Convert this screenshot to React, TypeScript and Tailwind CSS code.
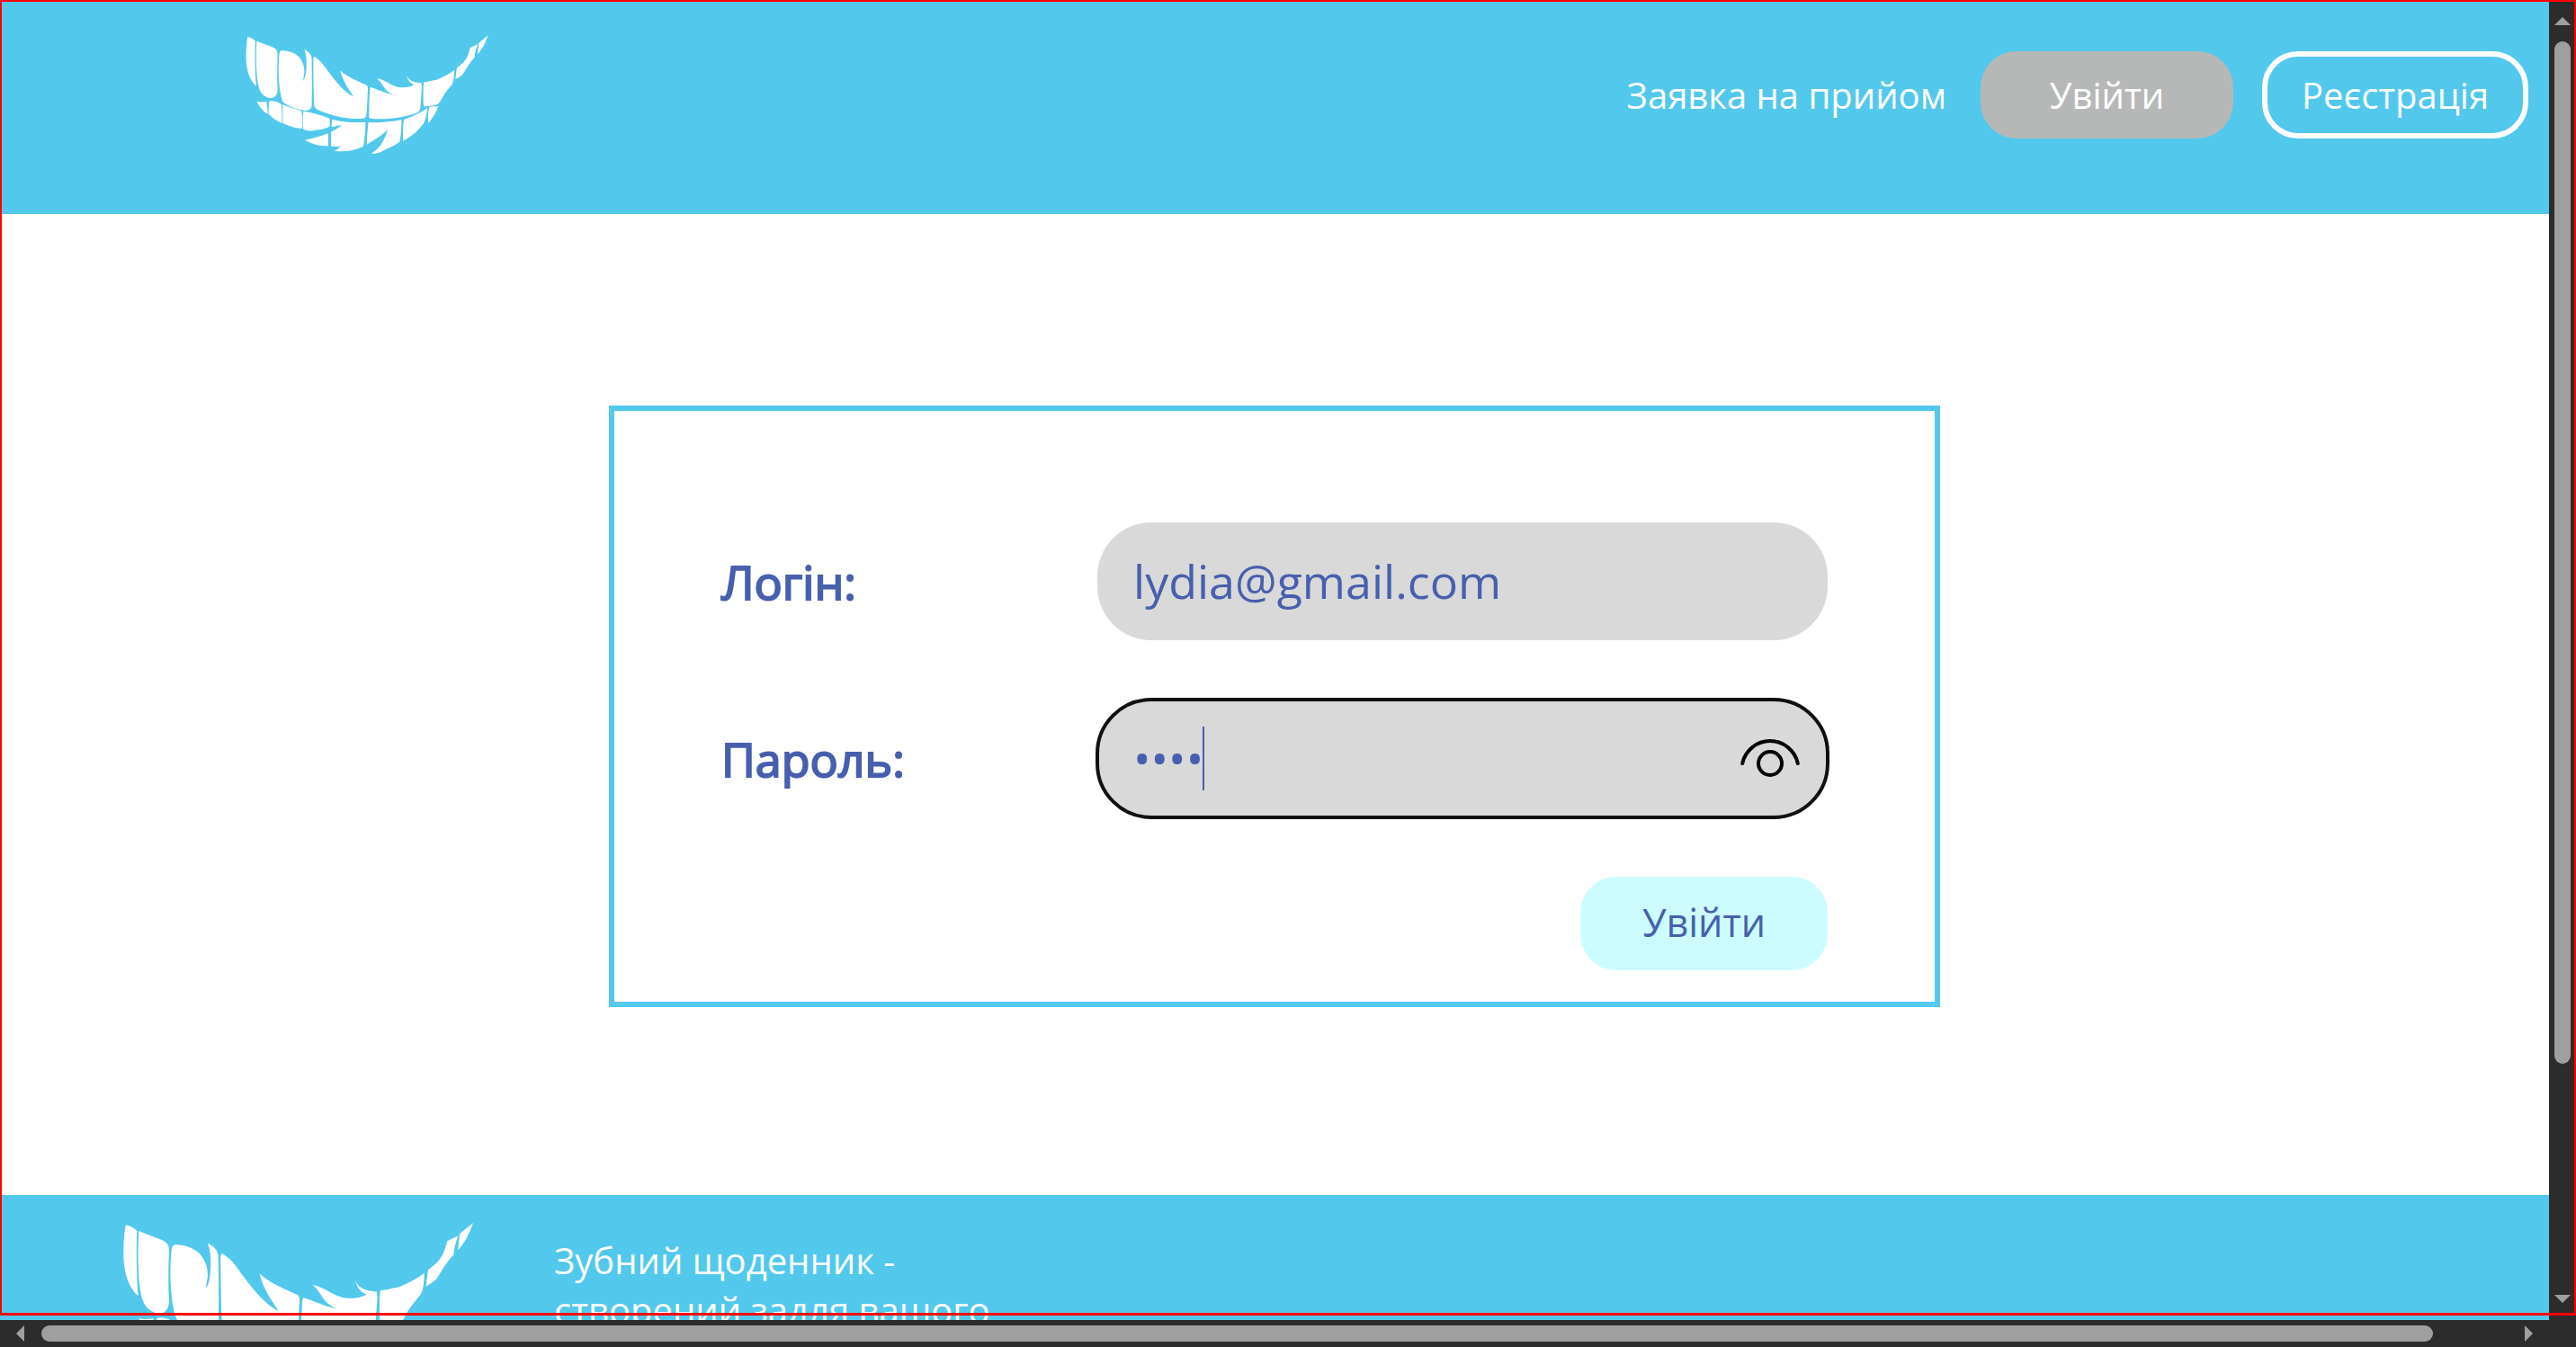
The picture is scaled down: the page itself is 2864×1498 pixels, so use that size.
import { useState } from "react";

const TEETH = [
  "M46 33C55 34 65 40 72 47C70 80 71 160 75 197C55 180 43 150 41 110C40 80 42 55 46 33Z",
  "M76 47L128 67C142 73 147 80 146 95C144 130 144 180 146 205C147 228 135 238 122 238C100 233 88 220 83 200C74 165 73 100 76 47Z",
  "M158 79C180 77 205 87 217 100C232 118 236 135 235 155C232 165 233 172 230 180C240 172 243 140 242 110C241 95 239 85 235 75C245 80 256 88 259 100C261 110 261 240 260 262C258 276 250 279 238 279C205 275 180 262 165 252C155 235 150 190 149 150C149 125 150 110 151 97C152 85 154 80 158 79Z",
  "M268 98C295 115 305 135 320 155C345 188 370 218 399 232C385 210 362 180 355 145C375 165 410 180 440 193C445 196 447 198 447 205C446 240 444 270 442 292C441 302 437 305 425 306C385 308 345 300 310 288C290 281 268 275 268 262C266 220 265 150 265 105Z",
  "M456 201C475 205 505 222 535 227C500 215 500 190 477 171C510 178 530 202 560 202C580 202 590 200 602 193C590 190 580 178 576 162C585 180 600 185 625 187L627 200L622 270C620 282 615 285 600 290C560 303 505 310 460 306C451 305 450 300 451 290C451 260 452 230 454 205Z",
  "M634 184C655 182 665 177 675 177C695 168 715 160 735 144C735 160 734 175 729 190C718 205 703 220 693 240C688 250 683 258 675 260C660 263 645 264 635 265C631 264 632 230 632 200Z",
  "M744 136C775 115 780 100 788 70L813 58C808 75 804 85 803 102C785 120 775 140 765 155C758 165 750 168 739 175Z",
  "M817 53L848 28C838 55 828 75 813 91Z",
  "M76 249C90 252 100 250 109 249C112 265 112 280 114 291C100 285 85 265 76 249Z",
  "M118 248C128 244 145 248 159 259C161 280 160 300 161 321C145 315 125 300 116 290C117 275 115 260 118 248Z",
  "M163 259C185 268 205 275 226 280C229 300 228 320 228 339C205 337 180 330 163 320Z",
  "M232 281C260 284 290 294 320 305L320 331C300 345 280 341 265 346C250 348 235 345 231 340C229 320 229 300 232 281Z",
  "M236 377C265 373 290 364 315 355L315 397C290 398 260 390 236 377Z",
  "M327 308C360 317 400 320 439 317C439 345 436 375 432 399C400 413 370 418 333 413C345 410 350 405 355 398C345 400 335 399 324 398L324 350C340 342 350 335 360 326C350 328 338 332 326 334Z",
  "M449 318C485 320 525 316 559 310C560 335 557 360 553 383C535 397 510 405 490 417C480 422 470 423 458 422C490 405 505 370 514 341C495 362 470 375 443 392C444 365 446 340 449 318Z",
  "M567 309C595 300 620 288 645 271C643 290 640 310 633 322C615 345 595 365 564 380C564 355 564 330 567 309Z",
  "M653 266L682 265C675 285 662 305 649 322C647 300 646 285 653 266Z",
];

function Logo({ className }: { className: string }) {
  return (
    <svg viewBox="36 24 816 402" className={className} fill="#fff" aria-hidden="true">
      {TEETH.map((d) => (
        <path key={d} d={d} />
      ))}
    </svg>
  );
}

function Header() {
  return (
    <header className="flex h-[238px] items-start justify-between bg-[#52c8ed] pr-[23px] pl-[272px]">
      <a href="#" aria-label="Зубний щоденник" className="mt-[38px]">
        <Logo className="w-[272px]" />
      </a>
      <nav className="mt-[57px] flex h-[97px] items-center gap-8 text-[40px] text-white">
        <a href="#" className="mr-1.5">
          Заявка на прийом
        </a>
        <button type="button" className="h-full w-[281px] rounded-[40px] bg-[#b6b8b8]">
          Увійти
        </button>
        <button type="button" className="h-full w-[296px] rounded-[40px] border-6 border-white">
          Реєстрація
        </button>
      </nav>
    </header>
  );
}

function LoginForm() {
  const [login, setLogin] = useState("lydia@gmail.com");
  const [password, setPassword] = useState("1234");
  const [visible, setVisible] = useState(false);

  return (
    <form
      className="flex w-[1480px] flex-col gap-[66px] border-6 border-[#52c8ed] px-[119px] pt-[124px] pb-[35px] text-[52px] text-[#475fae]"
      onSubmit={(e) => e.preventDefault()}
    >
      <div className="flex items-center justify-between">
        <label htmlFor="login" className="[-webkit-text-stroke:2px_#475fae]">
          Логін:
        </label>
        <input
          id="login"
          type="text"
          value={login}
          onChange={(e) => setLogin(e.target.value)}
          className="h-[131px] w-[812px] rounded-[60px] bg-[#d9d9d9] px-10 pb-0.5 outline-none"
        />
      </div>
      <div className="flex items-center justify-between">
        <label htmlFor="password" className="[-webkit-text-stroke:2px_#475fae]">
          Пароль:
        </label>
        <div className="relative">
          <input
            id="password"
            type={visible ? "text" : "password"}
            value={password}
            onChange={(e) => setPassword(e.target.value)}
            className="block h-[131px] w-[812px] rounded-[60px] bg-[#d9d9d9] pr-28 pb-0.5 pl-10 caret-transparent outline-4 -outline-offset-2 outline-[#101010]"
          />
          <span className="pointer-events-none absolute top-[30px] left-[117px] h-[71px] w-0.5 bg-[#475fae]" />
          <button
            type="button"
            aria-label="Показати пароль"
            onClick={() => setVisible(!visible)}
            className="absolute top-[43px] right-[31px]"
          >
            <svg
              width="66"
              height="46"
              viewBox="0 0 66 46"
              fill="none"
              stroke="#000"
              strokeWidth="4"
              strokeLinecap="round"
            >
              <path d="M2.2 28A31.5 31.5 0 0 1 63.8 28" />
              <circle cx="33" cy="28" r="13" />
            </svg>
          </button>
        </div>
      </div>
      <button
        type="submit"
        className="h-[104px] w-[275px] self-end rounded-[40px] bg-[#ccfcff] pb-0.5 text-[43px]"
      >
        Увійти
      </button>
    </form>
  );
}

function Footer() {
  return (
    <footer className="flex bg-[#52c8ed] pt-[29px] pl-[135px] text-[40px] text-white">
      <Logo className="w-[393px] shrink-0" />
      <p className="mt-4 ml-[88px] w-[500px] leading-[55px]">
        Зубний щоденник - створений задля вашого
      </p>
    </footer>
  );
}

function Arrow({ points, className }: { points: string; className: string }) {
  return (
    <svg viewBox="0 0 18 18" className={className} fill="#9f9f9f" aria-hidden="true">
      <polygon points={points} />
    </svg>
  );
}

export default function App() {
  return (
    <div className="relative grid h-screen grid-cols-[1fr_30px] grid-rows-[1fr_30px] overflow-hidden bg-[#2c2c2c] font-['Open_Sans',sans-serif]">
      <div className="min-h-0 min-w-0 overflow-hidden bg-white">
        <Header />
        <main className="flex justify-center pt-[213px] pb-[209px]">
          <LoginForm />
        </main>
        <Footer />
      </div>

      <div className="flex flex-col items-center pt-[19px] pb-[19px]">
        <Arrow points="0,9 9,0 18,9" className="size-[18px]" />
        <div className="mt-[9px] w-[18px] flex-[1137] rounded-full bg-[#9f9f9f]" />
        <div className="flex-[257]" />
        <Arrow points="0,0 18,0 9,9" className="-mb-[9px] size-[18px]" />
      </div>

      <div className="flex items-center pr-[18px] pl-[18px]">
        <Arrow points="9,0 9,18 0,9" className="size-[18px]" />
        <div className="ml-2.5 h-[18px] flex-[2659] rounded-full bg-[#9f9f9f]" />
        <div className="flex-[102]" />
        <Arrow points="0,0 9,9 0,18" className="-mr-[9px] size-[18px]" />
      </div>

      <div className="pointer-events-none absolute inset-x-0 top-0 bottom-[35px] border-2 border-b-3 border-[#ff0000]" />
    </div>
  );
}
